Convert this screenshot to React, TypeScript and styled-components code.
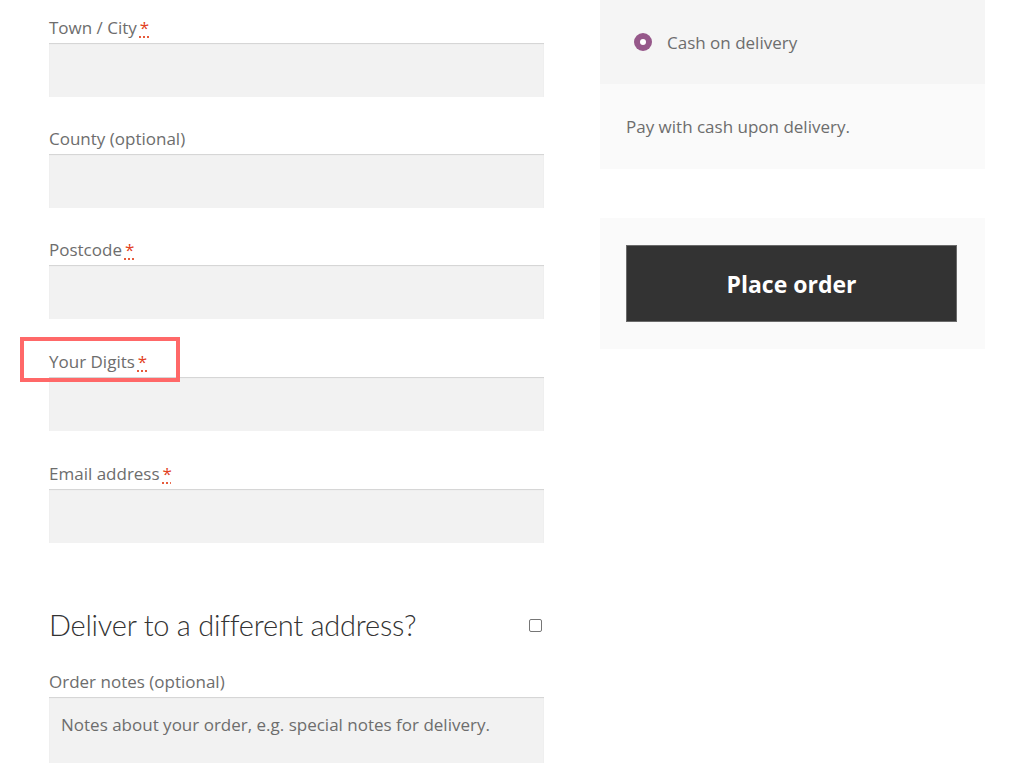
import React from "react";
import styled, { createGlobalStyle } from "styled-components";

const FONT = `"Open Sans", "Noto Sans", sans-serif`;

const Global = createGlobalStyle`
  html, body { margin: 0; padding: 0; background: #ffffff; }
  body { font-family: ${FONT}; color: #6d6d6d; }
  * { box-sizing: border-box; }
`;

const Page = styled.div`
  display: grid;
  grid-template-columns: 495px 385px;
  column-gap: 56px;
  padding-left: 49px;
  width: 1024px;
  height: 763px;
  overflow: hidden;
`;

const LeftCol = styled.div`
  display: flex;
  flex-direction: column;
  padding-top: 17px;
`;

const Field = styled.div<{ $gap?: number }>`
  display: flex;
  flex-direction: column;
  margin-bottom: ${(p) => p.$gap ?? 32}px;
  position: relative;
`;

const Label = styled.label`
  display: block;
  font-size: 17px;
  line-height: 22px;
  height: 26px;
  color: #6d6d6d;
  white-space: nowrap;
`;

const Req = styled.abbr`
  color: #e2401c;
  text-decoration: underline dotted;
  text-underline-offset: 3px;
  border: none;
  margin-left: 3px;
`;

const Input = styled.div`
  height: 53.5px;
  background: #f2f2f2;
  box-shadow: inset 0 1px 1px rgba(0, 0, 0, 0.13);
`;

const TextArea = styled.div`
  height: 80px;
  background: #f2f2f2;
  box-shadow: inset 0 1px 1px rgba(0, 0, 0, 0.13);
  padding: 17px 12px;
  font-size: 17px;
  line-height: 22px;
  color: #6d6d6d;
  white-space: nowrap;
`;

const Highlight = styled.div`
  position: absolute;
  left: -29px;
  top: -14px;
  width: 160px;
  height: 45px;
  border: 4px solid #ff6868;
  pointer-events: none;
`;

const ShipRow = styled.div`
  display: flex;
  align-items: center;
  justify-content: space-between;
  margin-top: 26px;
  margin-bottom: 21px;
`;

const Heading = styled.h3`
  margin: 0;
  font-family: Lato, ${FONT};
  font-size: 29px;
  font-weight: 300;
  line-height: 50px;
  color: #333333;
  letter-spacing: -0.25px;
`;

const CheckBox = styled.span`
  width: 13px;
  height: 13px;
  border: 1px solid #767676;
  border-radius: 2px;
  margin-right: 2px;
  background: #fff;
`;

const RightCol = styled.div`
  display: flex;
  flex-direction: column;
`;

const MethodHead = styled.div`
  height: 84px;
  background: #f5f5f5;
  display: flex;
  align-items: center;
  padding-left: 34px;
  gap: 15px;
  font-size: 17px;
`;

const Radio = styled.span`
  width: 18px;
  height: 18px;
  border-radius: 50%;
  background: #96588a;
  display: flex;
  align-items: center;
  justify-content: center;
  &::after {
    content: "";
    width: 6px;
    height: 6px;
    border-radius: 50%;
    background: #fff;
  }
`;

const MethodBody = styled.div`
  height: 85px;
  background: #fafafa;
  display: flex;
  align-items: center;
  padding-left: 26px;
  font-size: 17px;
`;

const OrderBox = styled.div`
  margin-top: 49px;
  background: #fafafa;
  padding: 27px 28px 27px 26px;
`;

const PlaceButton = styled.button`
  display: block;
  width: 100%;
  height: 77px;
  background: #333333;
  border: 1px solid #6a6a6a;
  color: #ffffff;
  font-family: ${FONT};
  font-size: 23px;
  font-weight: 700;
  cursor: pointer;
`;

const fields = [
  { label: "Town / City", req: true },
  { label: "County (optional)", req: false },
  { label: "Postcode", req: true },
  { label: "Your Digits", req: true, hl: true },
  { label: "Email address", req: true },
];

export default function App() {
  return (
    <>
      <Global />
      <Page>
        <LeftCol>
          {fields.map((f, i) => (
            <Field key={f.label} $gap={i === 2 || i === 3 ? 32.5 : 31.5}>
              {f.hl && <Highlight />}
              <Label>
                {f.label}
                {f.req && <Req title="required">*</Req>}
              </Label>
              <Input />
            </Field>
          ))}
          <ShipRow>
            <Heading>Deliver to a different address?</Heading>
            <CheckBox />
          </ShipRow>
          <Field>
            <Label>Order notes (optional)</Label>
            <TextArea>Notes about your order, e.g. special notes for delivery.</TextArea>
          </Field>
        </LeftCol>
        <RightCol>
          <MethodHead>
            <Radio />
            <span>Cash on delivery</span>
          </MethodHead>
          <MethodBody>Pay with cash upon delivery.</MethodBody>
          <OrderBox>
            <PlaceButton>Place order</PlaceButton>
          </OrderBox>
        </RightCol>
      </Page>
    </>
  );
}
